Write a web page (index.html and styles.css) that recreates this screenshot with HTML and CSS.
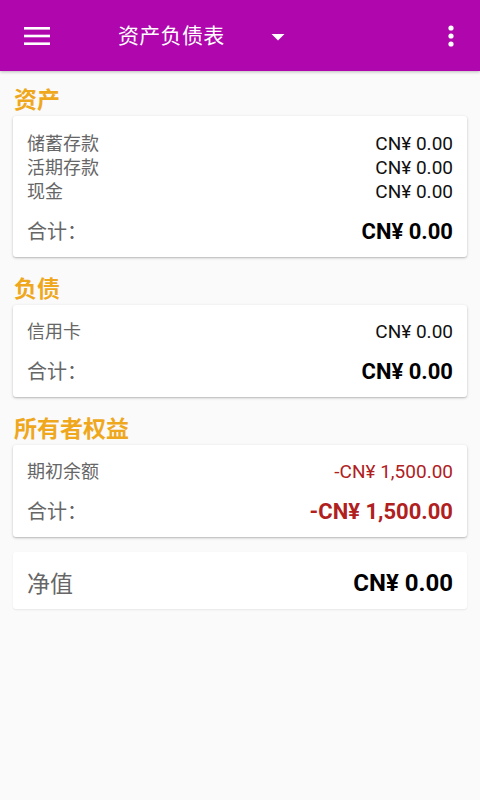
FILE: index.html
```html
<!DOCTYPE html>
<html lang="zh">
<head>
<meta charset="utf-8">
<title>资产负债表</title>
<link rel="stylesheet" href="styles.css">
</head>
<body>
<header class="appbar">
  <svg class="menu" width="26" height="20" viewBox="0 0 26 20"><rect x="0" y="1" width="26" height="2.6" fill="#fff"/><rect x="0" y="8.7" width="26" height="2.6" fill="#fff"/><rect x="0" y="16.4" width="26" height="2.6" fill="#fff"/></svg>
  <div class="title">资产负债表</div>
  <svg class="caret" width="14" height="8" viewBox="0 0 14 8"><path d="M0.5 1 L13.5 1 L7 7.5 Z" fill="#fff"/></svg>
  <div class="spacer"></div>
  <svg class="more" width="6" height="22" viewBox="0 0 6 22"><circle cx="3" cy="3" r="2.6" fill="#fff"/><circle cx="3" cy="11" r="2.6" fill="#fff"/><circle cx="3" cy="19" r="2.6" fill="#fff"/></svg>
</header>
<main class="content">
  <section class="section first">
    <h2 class="sec-title">资产</h2>
    <div class="card">
      <div class="row"><span class="label">储蓄存款</span><span class="value">CN¥ 0.00</span></div>
      <div class="row"><span class="label">活期存款</span><span class="value">CN¥ 0.00</span></div>
      <div class="row"><span class="label">现金</span><span class="value">CN¥ 0.00</span></div>
      <div class="total"><span class="tlabel">合计：</span><span class="tvalue">CN¥ 0.00</span></div>
    </div>
  </section>
  <section class="section">
    <h2 class="sec-title">负债</h2>
    <div class="card">
      <div class="row"><span class="label">信用卡</span><span class="value">CN¥ 0.00</span></div>
      <div class="total"><span class="tlabel">合计：</span><span class="tvalue">CN¥ 0.00</span></div>
    </div>
  </section>
  <section class="section">
    <h2 class="sec-title">所有者权益</h2>
    <div class="card">
      <div class="row"><span class="label">期初余额</span><span class="value neg">-CN¥ 1,500.00</span></div>
      <div class="total"><span class="tlabel">合计：</span><span class="tvalue neg">-CN¥ 1,500.00</span></div>
    </div>
  </section>
  <div class="card net">
    <span class="nlabel">净值</span><span class="nvalue">CN¥ 0.00</span>
  </div>
</main>
</body>
</html>
```
FILE: styles.css
```css
* { box-sizing: border-box; }
html, body { margin: 0; padding: 0; }
body {
  width: 480px;
  height: 800px;
  background: #fafafa;
  font-family: Roboto, "Noto Sans CJK SC", sans-serif;
  overflow: hidden;
}
.appbar {
  height: 71px;
  background: #b006ad;
  display: flex;
  align-items: center;
  padding: 0 26px 0 24px;
  box-shadow: 0 1px 3px rgba(0,0,0,0.25);
}
.menu { display: block; }
.title {
  margin-left: 68px;
  color: #fff;
  font-size: 21px;
  line-height: 30px;
  letter-spacing: 0.3px;
}
.caret { display: block; margin-left: 46px; margin-top: 2px; }
.spacer { flex: 1; }
.more { display: block; }
.content { padding: 0 13px; }
.section { margin-top: 18px; }
.section.first { margin-top: 15px; }
.sec-title {
  margin: 0;
  padding-left: 1px;
  font-size: 23px;
  line-height: 30px;
  font-weight: bold;
  color: #efa81d;
}
.card {
  background: #fff;
  border-radius: 3px;
  box-shadow: 0 1px 3px rgba(0,0,0,0.22), 0 1px 1px rgba(0,0,0,0.08);
  padding: 14px 14px 11px;
}
.section.first .card { padding-top: 15px; }
.row {
  display: flex;
  justify-content: space-between;
  align-items: center;
  height: 24px;
}
.label { font-size: 18px; color: #666; margin-bottom: 3px; }
.value { font-size: 19px; color: #111; }
.total {
  display: flex;
  justify-content: space-between;
  align-items: center;
  height: 30px;
  margin-top: 13px;
}
.tlabel { font-size: 20px; color: #666; margin-bottom: 1px; }
.tvalue { font-size: 22px; font-weight: bold; color: #000; }
.neg { color: #b0201e; }
.net {
  margin-top: 15px;
  height: 57px;
  padding: 0 14px;
  display: flex;
  justify-content: space-between;
  align-items: center;
  box-shadow: 0 1px 2px rgba(0,0,0,0.08);
}
.nlabel { font-size: 23px; color: #666; margin-top: 2px; }
.nvalue { font-size: 24px; font-weight: bold; color: #000; margin-top: 4px; }
```
